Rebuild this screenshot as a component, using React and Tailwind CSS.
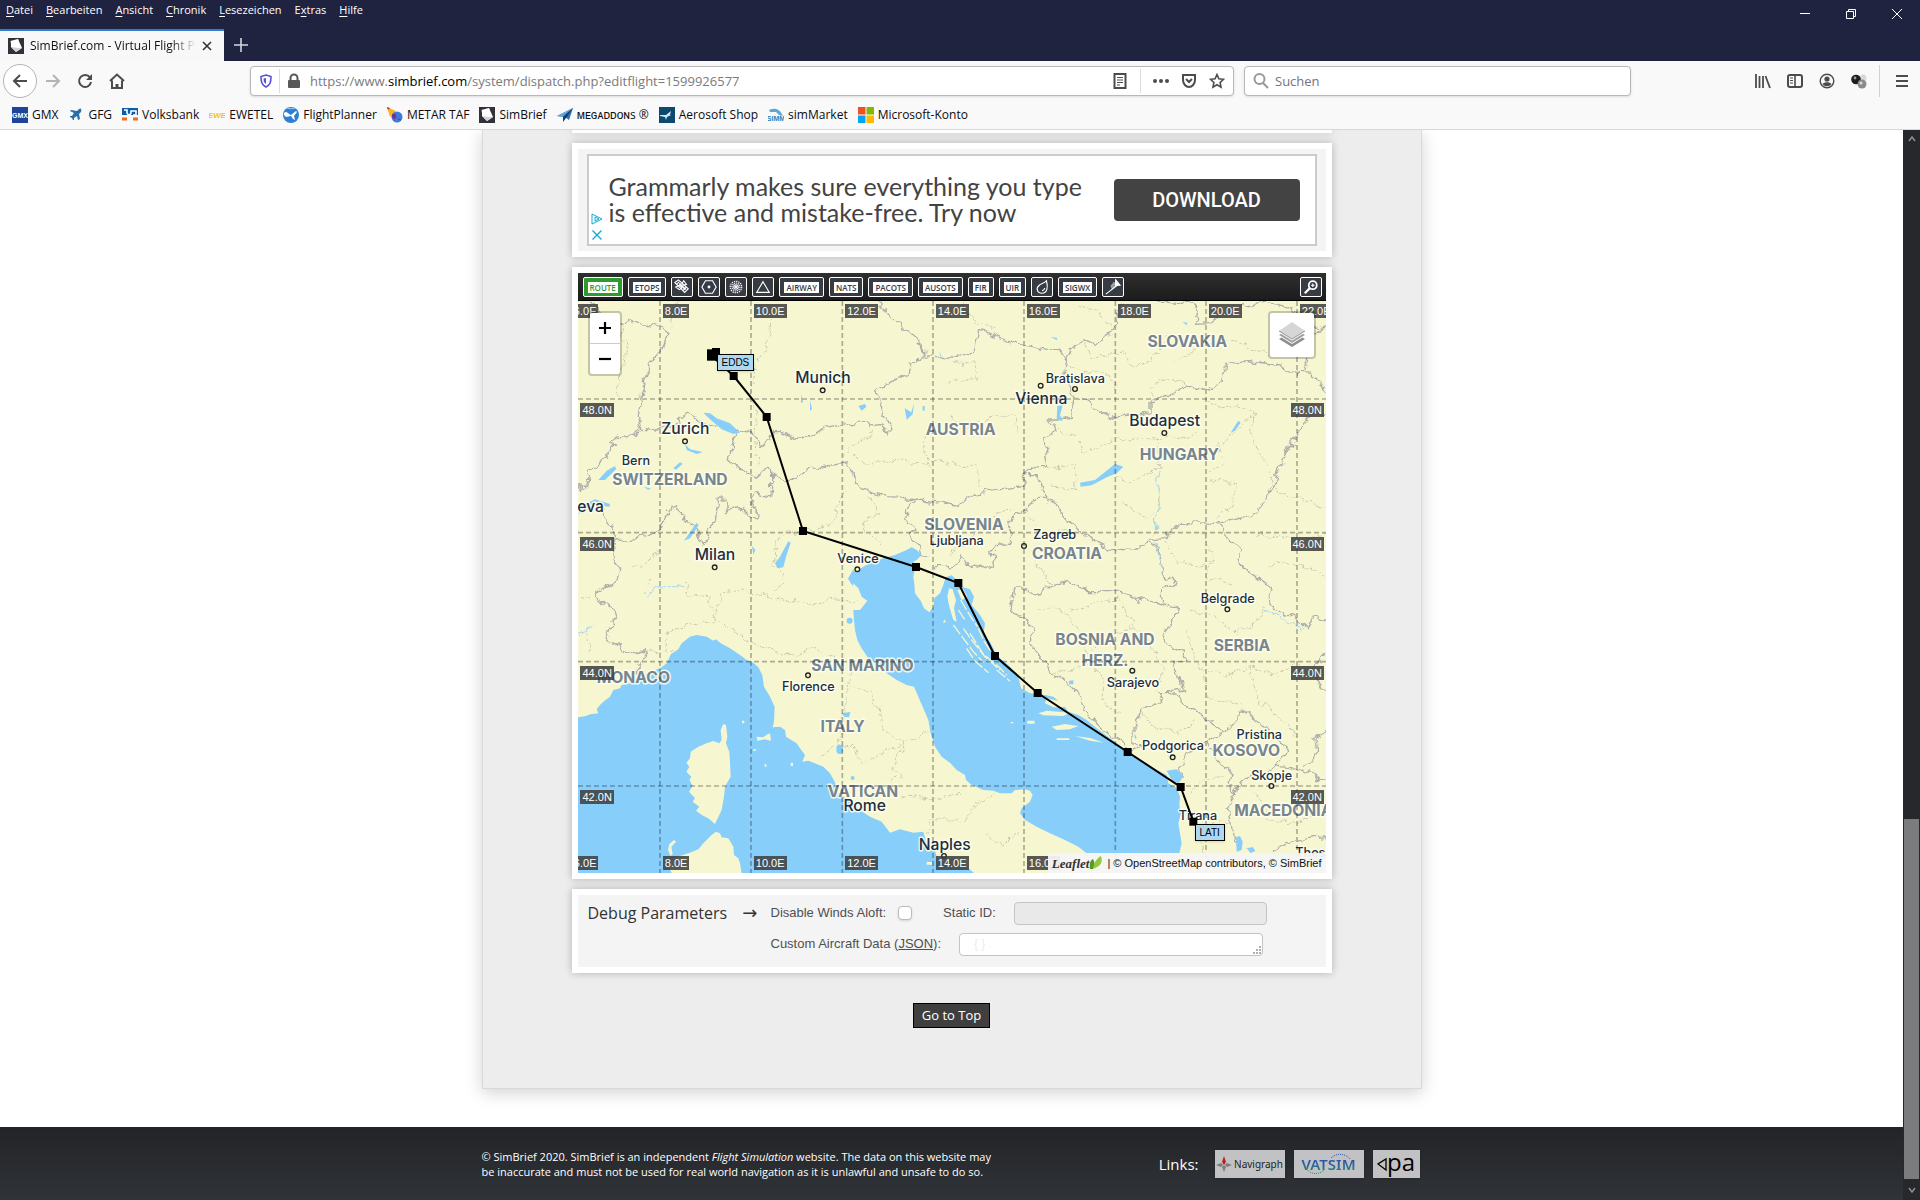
import React from "react";

/* ---------- browser chrome ---------- */

const MENU = ["Datei", "Bearbeiten", "Ansicht", "Chronik", "Lesezeichen", "Extras", "Hilfe"];
const MENU_KEY = { Extras: 1 };

function SimBriefIcon() {
  return (
    <svg className="size-4 shrink-0" viewBox="0 0 16 16" aria-hidden="true">
      <rect width="16" height="16" fill="#2f3236" />
      <path d="M2 3l8-2 1 2-8 3z" fill="#8c9095" />
      <path d="M3 3l7-2 4 9-6 4-5-5z" fill="#fff" />
      <path d="M3 9l5 5 6-4-4 0z" fill="#cfd2d6" />
    </svg>
  );
}

function BookmarkIcon({ name }) {
  const art = {
    gmx: (
      <>
        <rect width="16" height="16" fill="#1c449b" />
        <text x="8" y="11" fontSize="7" fontWeight="bold" textAnchor="middle" fill="#fff" fontFamily="Liberation Sans, sans-serif">GMX</text>
      </>
    ),
    gfg: <path d="M13 2c-1-1-2 0-4 2L3 3 2 4l4 2-2 3-2 0 0 1 2 1 1 2 1 0 0-2 3-2 1 4 2-1-1-5c2-2 3-3 2-5z" fill="#2a6fa8" />,
    vb: (
      <>
        <path d="M0 1h16v7H0z" fill="#0a5da8" />
        <path d="M2 3h3v3l2 3 2-3V4h5v4h-3" stroke="#fff" strokeWidth="1.6" fill="none" />
        <path d="M0 12h5M11 12h5" stroke="#f26a21" strokeWidth="3" />
      </>
    ),
    ewe: (
      <text x="8" y="11" fontSize="8" fontWeight="bold" fontStyle="italic" textAnchor="middle" fill="#f3c60c" fontFamily="Liberation Sans, sans-serif">EWE</text>
    ),
    fp: (
      <>
        <circle cx="8" cy="8" r="8" fill="#2d7fd6" />
        <path d="M1 6c3-3 4 1 7 2l5-4 1 1-3 4 1 4-2-1-2-3-5 1-2-2z" fill="#fff" />
        <path d="M4 1c3 1 5 1 8 0" stroke="#9ccaf5" fill="none" />
      </>
    ),
    metar: (
      <>
        <path d="M0 0l9 4-6 6z" fill="#f4b71f" />
        <path d="M0 0l3 1-2 2z" fill="#d23" />
        <circle cx="10" cy="10" r="5.5" fill="#3b7be0" />
        <path d="M6 7l3 1-1 4-3-2zM11 12l3 1" fill="#7c2f8a" stroke="#7c2f8a" />
      </>
    ),
    mega: (
      <>
        <path d="M0 9L16 1l-4 12-4-3z" fill="#2f6fb4" />
        <path d="M16 1L6 10v5l3-4z" fill="#133c70" />
        <path d="M0 9L16 1 5 10z" fill="#6aa4dc" />
      </>
    ),
    aero: (
      <>
        <rect width="16" height="16" fill="#0d4870" />
        <path d="M1 8h6l5-4-1 4 1 0-4 2-1 3-1-3-5-1z" fill="#d7e8f4" />
      </>
    ),
    simm: (
      <>
        <path d="M1 3c6-3 11-1 14 6L11 8 8 5 2 5z" fill="#5fa6d3" />
        <text x="8" y="14" fontSize="7" fontWeight="bold" textAnchor="middle" fill="#2f7fb2" fontFamily="Liberation Sans, sans-serif">SIMM</text>
      </>
    ),
    ms: (
      <>
        <path d="M0 0h7.500v7.500H0z" fill="#f25022" />
        <path d="M8.500 0H16v7.500H8.500z" fill="#7fba00" />
        <path d="M0 8.500h7.500V16H0z" fill="#00a4ef" />
        <path d="M8.500 8.500H16V16H8.500z" fill="#ffb900" />
      </>
    ),
  };
  if (name === "sb") return <SimBriefIcon />;
  return (
    <svg className="size-4 shrink-0" viewBox="0 0 16 16" aria-hidden="true">
      {art[name]}
    </svg>
  );
}

const BOOKMARKS = [
  ["gmx", "GMX"],
  ["gfg", "GFG"],
  ["vb", "Volksbank"],
  ["ewe", "EWETEL"],
  ["fp", "FlightPlanner"],
  ["metar", "METAR TAF"],
  ["sb", "SimBrief"],
  ["mega", "ᴍᴇɢᴀᴅᴅᴏɴs ®"],
  ["aero", "Aerosoft Shop"],
  ["simm", "simMarket"],
  ["ms", "Microsoft-Konto"],
];

function Glyph({ children, className = "size-4", box = "0 0 16 16" }) {
  return (
    <svg className={className} viewBox={box} fill="none" stroke="currentColor" strokeWidth="2" aria-hidden="true">
      {children}
    </svg>
  );
}

function Chrome() {
  return (
    <header className="shrink-0 font-['Open_Sans',sans-serif] text-xs">
      <div className="flex h-[61px] justify-between bg-[#202340] text-white">
        <div className="flex flex-col justify-between">
          <nav className="flex h-5 items-center gap-[13px] px-1.5 text-[11px]">
            {MENU.map((m) => {
              const k = MENU_KEY[m] || 0;
              return (
                <button key={m} type="button">
                  {m.slice(0, k)}
                  <u className="underline-offset-2">{m[k]}</u>
                  {m.slice(k + 1)}
                </button>
              );
            })}
          </nav>
          <div className="flex h-8 items-stretch">
            <div className="flex w-56 items-center gap-1.5 border-t-2 border-[#2f7bd0] bg-[#f8f8f8] pr-3 pl-2 text-[#111]">
              <SimBriefIcon />
              <span className="flex-1 overflow-hidden [mask-image:linear-gradient(to_right,black_85%,transparent)] whitespace-nowrap">
                SimBrief.com - Virtual Flight Planning
              </span>
              <button type="button" aria-label="Tab schließen" className="text-[#333]">
                <Glyph className="size-2.5" box="0 0 10 10"><path d="M1 1l8 8M9 1l-8 8" strokeWidth="1.6" /></Glyph>
              </button>
            </div>
            <button type="button" aria-label="Neuer Tab" className="px-2.5 text-[#d5d6de]">
              <Glyph className="size-3.5" box="0 0 14 14"><path d="M7 0v14M0 7h14" strokeWidth="1.6" /></Glyph>
            </button>
          </div>
        </div>
        <div className="flex h-7 items-center gap-9 pr-[18px]">
          <button type="button" aria-label="Minimieren">
            <Glyph className="size-2.5" box="0 0 10 10"><path d="M0 4.500h10" strokeWidth="1" /></Glyph>
          </button>
          <button type="button" aria-label="Verkleinern">
            <Glyph className="size-2.5" box="0 0 10 10"><path d="M.5 2.500h7v7h-7zM2.500 2.500v-2h7v7h-2" strokeWidth="1" /></Glyph>
          </button>
          <button type="button" aria-label="Schließen">
            <Glyph className="size-2.5" box="0 0 10 10"><path d="M0 0l10 10M10 0L0 10" strokeWidth="1" /></Glyph>
          </button>
        </div>
      </div>

      <div className="border-b border-[#d7d7d7] bg-[#f9f9fa] text-[#4c4c4f]">
        <div className="flex h-10 items-center">
          <div className="flex w-[250px] shrink-0 items-center gap-4 pl-[3px]">
            <button type="button" aria-label="Zurück" className="-mr-2 grid size-[34px] place-items-center rounded-full border border-[#b3b3b5] bg-white">
              <Glyph><path d="M15 8H2M8 2L2 8l6 6" /></Glyph>
            </button>
            <button type="button" aria-label="Vor" className="text-[#b4b4b6]">
              <Glyph><path d="M1 8h13M8 2l6 6-6 6" /></Glyph>
            </button>
            <button type="button" aria-label="Neu laden">
              <Glyph><path d="M13 4.500A6 6 0 1 0 14 9" /><path d="M15 1v6H9z" fill="currentColor" stroke="none" /></Glyph>
            </button>
            <button type="button" aria-label="Startseite">
              <Glyph><path d="M1 8l7-6.500L15 8M3 7.500V15h10V7.500" /><path d="M8 15v-4" strokeWidth="3" /></Glyph>
            </button>
          </div>
          <div className="flex h-[30px] flex-[966] items-center rounded-sm border border-[#b8b8ba] bg-white px-2 shadow-sm">
            <Glyph className="size-3.5 text-[#5a4fd6]" box="0 0 14 14">
              <path d="M7 1l5 1.500c0 6-1 8.500-5 10.500C3 11 2 8.500 2 2.500z" strokeWidth="1.600" />
              <path d="M7 4v6C5 9 4.500 7 4.500 4.500z" fill="currentColor" stroke="none" />
            </Glyph>
            <span className="mx-1.5 h-6 w-px bg-[#dcdcdc]" />
            <svg className="h-4 w-4 text-[#58585a]" viewBox="0 0 16 16" aria-hidden="true">
              <path d="M4.500 7V5a3.500 3.500 0 0 1 7 0v2" fill="none" stroke="currentColor" strokeWidth="2" />
              <rect x="2" y="7" width="12" height="8" rx="1" fill="currentColor" />
            </svg>
            <a href="https://www.simbrief.com/system/dispatch.php?editflight=1599926577" className="ml-2 flex-1 pt-0.5 text-[13px] text-[#7a7a7c]">
              https://www.<span className="text-black">simbrief.com</span>/system/dispatch.php?editflight=1599926577
            </a>
            <button type="button" aria-label="Leseansicht">
              <Glyph><path d="M2.500 1h11v14h-11z" /><path d="M5 4.500h6M5 7h6M5 9.500h6M5 12h3" strokeWidth="1" /></Glyph>
            </button>
            <span className="mr-3 ml-3 h-6 w-px bg-[#dcdcdc]" />
            <div className="flex items-center gap-3">
              <button type="button" aria-label="Seitenaktionen">
                <Glyph><g fill="currentColor" stroke="none"><circle cx="2" cy="8" r="2" /><circle cx="8" cy="8" r="2" /><circle cx="14" cy="8" r="2" /></g></Glyph>
              </button>
              <button type="button" aria-label="Pocket">
                <Glyph><path d="M2 2h12v5c0 4-3 7-6 7s-6-3-6-7z" /><path d="M5 6l3 3 3-3" /></Glyph>
              </button>
              <button type="button" aria-label="Lesezeichen">
                <Glyph><path d="M8 1.500l1.900 4.300 4.600.5-3.400 3.200.9 4.700L8 11.800l-4 2.400.9-4.700L1.500 6.300l4.600-.5z" strokeWidth="1.600" /></Glyph>
              </button>
            </div>
          </div>
          <label className="ml-2.5 flex h-[30px] flex-[369] items-center gap-1.5 rounded-sm border border-[#b8b8ba] bg-white px-2 shadow-sm">
            <Glyph className="size-4 text-[#98989a]"><circle cx="6.500" cy="6" r="5" /><path d="M10 10l5 5" /></Glyph>
            <input type="text" aria-label="Suchen" placeholder="Suchen" className="min-w-0 flex-1 pt-0.5 text-[13px] outline-none placeholder:text-[#737375]" />
          </label>
          <div className="flex w-[289px] shrink-0 items-center justify-end gap-4 pr-3">
            <button type="button" aria-label="Bibliothek">
              <Glyph><path d="M1 1v14M4.500 3v12M8 3v12M10.500 3l4.500 12" strokeWidth="1.800" /></Glyph>
            </button>
            <button type="button" aria-label="Sidebar">
              <Glyph><rect x="1" y="2" width="14" height="12" rx="2" /><path d="M8 2v12" strokeWidth="1.600" /><path d="M3 5h3M3 7.500h3M3 10h3" strokeWidth="1" /></Glyph>
            </button>
            <button type="button" aria-label="Konto">
              <Glyph><circle cx="8" cy="8" r="6.800" strokeWidth="1.400" /><circle cx="8" cy="6" r="2.600" fill="currentColor" stroke="none" /><path d="M3.500 11c2-2.500 7-2.500 9 0-2 3-7 3-9 0z" fill="currentColor" stroke="none" /></Glyph>
            </button>
            <button type="button" aria-label="Erweiterung">
              <svg className="size-4" viewBox="0 0 16 16" aria-hidden="true">
                <circle cx="12" cy="5" r="3.500" fill="#d9d9d9" />
                <circle cx="5" cy="6.500" r="4.800" fill="#1d1d1d" />
                <circle cx="4" cy="5" r="1.400" fill="#9a9a9a" />
                <circle cx="11" cy="11" r="4.500" fill="#8b8b8b" />
                <circle cx="10" cy="10" r="1.500" fill="#dcdcdc" />
              </svg>
            </button>
            <span className="-ml-1 h-8 w-px bg-[#d2d2d4]" />
            <button type="button" aria-label="Menü">
              <Glyph className="h-3 w-3" box="0 0 12 12"><path d="M0 1h12M0 6h12M0 11h12" /></Glyph>
            </button>
          </div>
        </div>
        <nav className="flex h-7 items-center gap-2.5 pl-3 text-xs text-[#0c0c0d]">
          {BOOKMARKS.map(([icon, label]) => (
            <a key={label} href={"#" + icon} className="flex items-center gap-1 whitespace-nowrap">
              <BookmarkIcon name={icon} />
              {label}
            </a>
          ))}
        </nav>
      </div>
    </header>
  );
}

/* ---------- map ---------- */

const MAP_X = 24;
const MAP_Y = 3;
const MAP_W = 2244;
const MAP_H = 1716;
const at = (x, y) => ({
  left: ((x - MAP_X) / MAP_W) * 100 + "%",
  top: ((y - MAP_Y) / MAP_H) * 100 + "%",
});

const MERIDIANS = [-3, 270, 543, 817, 1089, 1362, 1636, 1908, 2181];
const PARALLELS = [
  [297, "48.0N"],
  [698, "46.0N"],
  [1085, "44.0N"],
  [1458, "42.0N"],
];

const ROUTE = [
  [425, 167], [491, 228], [590, 351], [699, 693], [1038, 801], [1165, 849],
  [1275, 1068], [1403, 1179], [1673, 1356], [1832, 1461], [1870, 1565],
];

const COUNTRIES = [
  ["SWITZERLAND", 300, 555], ["AUSTRIA", 1172, 405], ["SLOVENIA", 1182, 691], ["CROATIA", 1491, 776],
  ["HUNGARY", 1828, 481], ["SLOVAKIA", 1852, 142], ["SAN MARINO", 877, 1112], ["MONACO", 190, 1148],
  ["ITALY", 818, 1297], ["VATICAN", 879, 1491], ["BOSNIA AND", 1605, 1034], ["HERZ.", 1605, 1097],
  ["SERBIA", 2016, 1054], ["KOSOVO", 2029, 1368], ["MACEDONIA", 2140, 1548],
];

const CITIES = [
  ["Munich", 759, 250], ["Zurich", 346, 403], ["eva", 62, 636], ["Milan", 435, 781], ["Vienna", 1414, 312],
  ["Budapest", 1784, 378], ["Rome", 884, 1533], ["Naples", 1124, 1649],
];

const TOWNS = [
  ["Bern", 198, 496], ["Venice", 864, 788], ["Ljubljana", 1160, 734], ["Zagreb", 1454, 716], ["Bratislava", 1516, 248],
  ["Florence", 715, 1173], ["Sarajevo", 1689, 1162], ["Belgrade", 1973, 908], ["Pristina", 2068, 1316],
  ["Podgorica", 1809, 1351], ["Skopje", 2105, 1439], ["Tirana", 1884, 1560], ["Thessaloniki", 2290, 1672],
];

const DOTS = [
  [758, 271], [345, 424], [434, 802], [862, 808], [1362, 738], [1515, 267], [1412, 257], [1783, 399],
  [714, 1126], [1122, 1668], [1687, 1112], [1972, 928], [1808, 1372], [2104, 1458],
];

const SEA = [
  "M24 1252L48 1248L60 1243L85 1240L80 1228L90 1215L100 1205L120 1190L130 1170L150 1165L155 1155L180 1150L205 1130L235 1120L275 1102L290 1090L303 1062L325 1048L335 1030L360 1010L380 1005L410 1010L430 1022L438 1018L450 1028L480 1045L510 1065L530 1080L550 1088L565 1102L577 1125L582 1160L600 1190L614 1220L612 1265L608 1282L630 1280L645 1290L648 1310L680 1330L690 1345L705 1365L697 1385L715 1382L760 1400L780 1420L795 1447L805 1480L835 1500L870 1530L900 1550L935 1565L960 1598L990 1588L1030 1598L1060 1595L1070 1630L1092 1640L1100 1670L1110 1685L1135 1680L1150 1672L1172 1690L1190 1700L1212 1719L24 1719Z",
  "M838 830L850 815L868 808L880 800L900 790L940 775L975 765L1005 752L1025 742L1040 750L1055 765L1040 780L1030 785L1036 800L1030 830L1033 850L1035 880L1052 902L1062 925L1078 937L1090 920L1093 895L1110 880L1120 855L1127 832L1145 826L1160 840L1180 862L1200 868L1212 890L1205 915L1230 945L1245 970L1240 1005L1260 1025L1275 1055L1290 1075L1320 1100L1345 1130L1353 1165L1380 1180L1425 1185L1450 1190L1480 1215L1495 1235L1525 1245L1550 1260L1580 1285L1620 1315L1655 1340L1685 1360L1720 1385L1760 1410L1790 1425L1795 1450L1820 1465L1830 1490L1828 1515L1833 1540L1825 1570L1830 1600L1835 1630L1828 1660L1550 1660L1525 1640L1485 1620L1440 1600L1400 1580L1365 1560L1350 1540L1355 1525L1380 1505L1388 1485L1380 1472L1365 1468L1335 1470L1325 1480L1290 1480L1270 1472L1240 1470L1205 1455L1188 1440L1185 1425L1160 1410L1140 1388L1115 1370L1095 1340L1082 1300L1075 1260L1060 1225L1045 1190L1032 1160L1010 1155L980 1140L950 1120L925 1095L895 1075L875 1045L862 1020L855 990L852 960L850 930L870 930L892 902L875 890L865 865L845 845Z",
];

const ISLANDS = [
  "M460 1272L468 1275L472 1310L468 1330L478 1355L480 1385L482 1430L465 1460L462 1490L455 1530L435 1572L415 1555L395 1545L378 1532L388 1520L368 1505L375 1495L357 1475L368 1458L358 1440L364 1430L349 1415L358 1400L349 1388L360 1375L362 1355L385 1340L410 1330L430 1323L448 1330L455 1320L452 1290Z",
  "M437 1595L450 1600L455 1612L475 1615L490 1640L492 1665L505 1675L510 1690L515 1719L305 1719L296 1700L305 1680L330 1668L355 1660L385 1648L400 1630L425 1605Z",
  "M312 1620L318 1625L304 1640L308 1662L302 1668L294 1650L298 1632Z",
  "M560 1310L580 1312L590 1304L600 1300L603 1322L592 1320L585 1318L562 1322Z",
  "M1137 865L1148 868L1158 900L1152 925L1160 965L1150 960L1138 920L1132 890Z",
  "M1162 870L1180 868L1192 890L1175 900Z",
  "M1128 965L1122 958L1120 970Z M516 1262h7v8h-7z M550 1347h8v5h-8z M584 1392h5v8h-5z M662 1388h7v10h-7z M1070 1686h16v8h-16z",
  "M1405 1240L1430 1232L1500 1238L1480 1248L1420 1246Z",
  "M1445 1280L1485 1272L1525 1278L1500 1288L1460 1290Z",
  "M1430 1195L1480 1205L1500 1220L1450 1222L1425 1210Z",
  "M1515 1308L1560 1314L1602 1328L1560 1322Z M1372 1262h22v9h-22z M1322 1266h8v4h-8z M1460 1315h38v5h-38z",
];

const ISLET_LINES = [
  "M1172 900l30 50l20 30", "M1150 975l30 40l30 40l30 32", "M1180 985l25 35l40 50l45 40", "M1165 930l20 30",
  "M1200 1000l40 62l50 42l20 22", "M1190 1045l25 38l40 35", "M1225 985l18 40l28 42", "M1280 1110l40 34",
];

const LAKES = [
  "M400 338L420 340L440 355L480 370L510 398L490 402L455 388L425 362Z",
  "M655 724L662 728L648 770L640 802L622 805L615 790L630 770Z",
  "M1532 560L1530 548L1575 540L1635 492L1660 500L1640 520L1610 532L1565 556Z",
  "M1462 318L1478 316L1470 345L1478 362L1460 360Z",
  "M24 640L40 615L75 598L120 612L118 620L70 615L40 640Z",
  "M85 540L110 512L135 498L138 508L105 540Z",
  "M380 668L386 676L360 715L342 722L365 690Z",
  "M345 432L360 448L398 456L380 462L350 450Z",
  "M865 318l20-6 4 8-14 12z M693 283l6 22-6 4z M720 300l6 28-6 4z M1004 325l20 12 8-28-4 34-18 16z M1058 318h6v14h-6z",
  "M1982 398L2005 362L2012 368L1995 392Z M1838 66l14 2-2 8z M1442 110l20 4-2 6z",
  "M310 505l20-18 8 4-20 18z M286 440l14 6 M222 560l22 6-10 3z M546 738l10 12-6 14z",
  "M830 962a9 9 0 1 1 18 0a9 9 0 1 1-18 0M815 1240l26-4-4 16-14-2zM800 1348a10 10 0 1 1 18 0a10 10 0 1 1-18 0M842 1434a6 6 0 1 1 12 0a6 6 0 1 1-12 0",
  "M1790 1412L1820 1408L1840 1430L1825 1450L1805 1440Z M1496 1143l14-2v12h-12z",
  "M1998 1612L2010 1608L2018 1625L2015 1650L2000 1655Z M2030 1645l18-4 8 12-14 6z",
  "M1694 1300l6 14-6 2z M850 808l8 20-10 30-14-22z",
];

const BORDERS = [
  "M150 70L175 70L190 58L215 75L250 78L295 98L270 150L245 180L225 240L215 280L205 350L215 385L190 410L140 402L120 425L135 430L110 470L60 520L50 550L24 575",
  "M150 70L90 40L60 10",
  "M215 385L260 390L290 380L330 372L325 350L350 340L370 355L395 368L455 388",
  "M485 488L475 480L480 450L490 430L500 395L520 390L545 400L575 440L605 420L610 395L630 395L680 420L735 405L765 385L840 370L860 360L900 370L935 375L955 405L962 370L935 345L945 325L915 275L960 240L1010 225L1020 180L1058 178L1062 140L1020 100L1000 85L980 60L930 20L925 3",
  "M1062 140L1065 170L1100 172L1140 178L1160 165L1185 170L1215 150L1225 92L1250 95L1290 115L1330 125L1365 140L1440 148L1465 148L1490 180L1485 215L1500 260L1515 295L1505 330L1510 355L1460 360L1425 360L1450 375L1455 400L1425 415L1430 500L1405 500L1360 530L1358 560L1300 565L1240 575L1210 580L1165 620L1140 612L1100 605L1040 600L960 590L880 568L850 540L845 515L830 495L842 485L800 490L720 510L690 525L650 545L605 530L605 510L590 505L565 530L530 515L485 488",
  "M605 530L605 560L602 590L555 580L545 600L550 620L565 640L555 655L530 635L500 620L470 635L465 600L445 600L440 660L410 690L415 720L400 732L385 700L370 680L330 650L325 610L300 630L280 670L265 690L235 710L175 715L135 720L130 690L105 650L100 620",
  "M135 720L125 760L155 815L145 842L80 875L100 915L135 930L140 955L110 985L120 1020L150 1045L180 1060L222 1050L230 1065L215 1090L195 1115",
  "M1040 600L1010 640L1005 655L1035 690L1020 700L1050 740L1055 765L1072 775",
  "M1375 530L1405 530L1415 570L1430 595L1398 595L1390 615L1315 665L1325 690L1320 725L1265 750L1275 800L1250 805L1215 790L1195 800L1170 770L1140 800L1085 800",
  "M1430 595L1460 615L1495 660L1535 700L1580 725L1615 742L1695 748L1745 715L1780 710L1840 668L1940 670L2010 655L2050 650L2075 620L2085 580L2110 560L2125 510L2180 400L2220 350L2268 345",
  "M1515 295L1540 295L1570 325L1620 348L1700 345L1740 335L1740 300L1800 285L1850 255L1910 270L1955 245L1970 190L2020 182L2100 195L2125 190L2150 215L2200 218L2225 220L2235 245L2268 275",
  "M1490 180L1505 140L1535 120L1580 130L1625 100L1645 75L1650 20L1660 5",
  "M1765 3L1820 10L1860 10L1885 35L1880 70L1920 68L1970 45L2020 15L2090 10L2140 20L2190 45L2240 80L2268 75M2255 75L2225 110L2200 218",
  "M1745 715L1770 760L1775 800L1780 820L1822 850L1780 868L1780 910",
  "M1940 670L1970 710L2010 740L2015 800L2060 830L2110 865L2095 900L2115 930L2180 955L2215 990L2235 950L2268 960",
  "M1335 855L1350 855L1390 880L1410 885L1440 855L1485 845L1520 855L1550 875L1620 875L1690 882L1700 905L1720 895L1780 915L1825 920L1805 970L1785 1010L1790 1035L1830 1055L1855 1080L1810 1090L1830 1130L1840 1170L1800 1175L1765 1175L1775 1205L1725 1225L1695 1270L1695 1330L1710 1340L1685 1360",
  "M1335 855L1330 900L1325 940L1365 950L1385 995L1385 1030L1435 1100L1530 1185L1540 1225L1560 1250L1590 1280L1630 1310L1670 1340",
  "M1800 1175L1860 1220L1910 1255L1960 1295L1940 1310L1910 1320L1860 1355L1830 1400L1840 1430",
  "M1960 1295L1990 1270L2020 1225L2055 1260L2080 1280L2130 1320L2150 1360L2120 1400L2070 1425L2010 1440L1995 1480L1980 1460L1985 1430L1930 1360L1910 1320",
  "M1995 1480L1975 1520L1985 1580L1990 1620L2020 1640",
  "M2120 1400L2190 1405L2230 1425L2268 1450M2268 1060L2225 1105L2268 1190M2268 1295L2235 1310L2240 1360L2200 1400M2100 1660L2170 1620L2268 1610",
];

const REGIONS = [
  "M150 70L170 130L160 200L140 290", "M330 3L300 80M580 10L605 60L600 110L560 190L545 260L560 340L555 400L565 500",
  "M840 440L900 410L905 390M840 440L820 470M850 470L900 490L960 480L1070 490L1110 480L1140 500", "M1080 380L1060 440L1080 500",
  "M840 570L810 600L790 660L740 690L650 700L620 720L610 790", "M610 790L640 830L620 870M190 800L270 760L270 750",
  "M900 590L920 640L880 660L885 700L940 740", "M340 840L360 885L420 890L435 960L470 980L500 1000L560 1040L640 1065L700 1060L730 1045L800 1080",
  "M435 960L450 880L520 870L600 890L700 912L800 900L860 905", "M280 1050L300 990L390 970L400 960L435 970",
  "M240 840L220 880M310 1055L280 1050L230 1060", "M840 1120L830 1190L820 1240L800 1330L850 1340L880 1388L1000 1330L1080 1290",
  "M840 1150L900 1180L930 1220L940 1290L1000 1330M1000 1330L970 1400L1000 1430L960 1440L960 1470", "M740 1380L790 1340M1000 1490L1080 1500L1170 1480M1070 1600L1080 1560L1170 1560",
  "M1180 3L1200 60L1280 95M1140 240L1220 240L1215 190L1150 185M1530 20L1580 30L1620 80M1540 130L1560 180L1660 150L1690 200L1740 190L1800 110",
  "M1500 200L1560 215L1620 220L1640 280M1820 190L1900 130L2000 120L2100 170M1740 300L1760 240L1800 235L1850 255",
  "M1520 410L1480 400L1440 360M1530 420L1540 460L1640 420L1740 410L1850 420L1880 400M1400 510L1520 490L1520 570L1440 560",
  "M1760 410L1770 510L1680 545L1640 530M1640 600L1700 640L1740 650L1770 620M1770 560L1755 700M1920 540L2000 545L1990 600L1940 660",
  "M1940 420L1960 500L1920 520M1960 430L2020 370L2060 340M2060 340L2040 400L2090 500L2110 560M1910 300L1950 330L2000 310L2060 340",
  "M2110 570L2200 600L2268 620M2060 700L2200 720L2268 700M2090 800L2180 790L2268 830M1900 700L1930 760L1910 830L1990 860",
  "M1140 350L1200 380L1280 340L1340 350L1340 390M1140 490L1220 500L1230 560M1140 760L1200 730L1240 660L1330 620",
  "M1380 640L1400 700L1500 690M1440 850L1400 800L1380 750M1780 720L1820 790L1900 800L1930 760",
  "M1400 920L1480 930L1530 1000L1560 1080L1600 1140L1600 1220L1650 1240M1500 930L1640 900L1680 950L1700 980L1620 1000L1560 1050",
  "M1700 980L1740 1030L1780 1100L1760 1170M1440 1110L1500 1120L1560 1080M1850 1000L1880 1100L1960 1130L2040 1100L2120 1130L2180 1080",
  "M1860 930L1930 950L2000 1000L2060 960L2090 920M1900 1130L1920 1200L2020 1210M2040 1100L2060 1200L2130 1250L2180 1310M2180 1080L2240 1140",
  "M1720 1240L1760 1290L1840 1290L1880 1260M1860 1480L1900 1440L1960 1430M1900 1660L1890 1600L1940 1560L1980 1570M2060 1480L2100 1560L2180 1570L2268 1520",
  "M1180 1560L1240 1500L1270 1480M1240 1600L1300 1640L1340 1600M60 900L30 890M24 1010L50 990L60 1060",
];

const RIVERS = "M1762 520L1770 600L1755 690M1760 720L1768 765L1775 800M2080 930L2150 960L2200 990M230 890L270 860L340 860M1560 300L1530 292M1100 145l10 30M24 1000l40-14";

function EuropeMap() {
  return (
    <svg className="block size-full" viewBox="24 3 2244 1716" preserveAspectRatio="none" role="img" aria-label="Map of the planned route from EDDS to LATI">
      <defs>
        <filter id="terrain" filterUnits="userSpaceOnUse" x="0" y="-20" width="2300" height="1760">
          <feTurbulence type="fractalNoise" baseFrequency="0.03" numOctaves="3" seed="4" />
          <feDisplacementMap in="SourceGraphic" scale="34" xChannelSelector="R" yChannelSelector="G" />
        </filter>
      </defs>
      <rect x="24" y="3" width="2244" height="1716" fill="#f6f6d0" />
      <g filter="url(#terrain)">
        <g fill="none" stroke="#c9c9b2" strokeWidth="3" strokeDasharray="10 5" strokeLinejoin="round">
          {REGIONS.map((d) => <path key={d} d={d} />)}
        </g>
        <g fill="none" stroke="#aeaeaa" strokeWidth="4" strokeLinejoin="round">
          {BORDERS.map((d) => <path key={d} d={d} />)}
        </g>
        <path d={RIVERS} fill="none" stroke="#a9d8ef" strokeWidth="3" />
      </g>
      <g fill="#87cefa">
        {SEA.map((d) => <path key={d} d={d} />)}
        {LAKES.map((d) => <path key={d} d={d} />)}
      </g>
      <g fill="#f6f6d0">
        {ISLANDS.map((d) => <path key={d} d={d} />)}
      </g>
      <g fill="none" stroke="#f6f6d0" strokeWidth="4" strokeDasharray="34 7">
        {ISLET_LINES.map((d) => <path key={d} d={d} />)}
      </g>

      <g fontFamily="Inter, sans-serif" textAnchor="middle" stroke="#fffff0" strokeOpacity="0.850" strokeWidth="9" strokeLinejoin="round" paintOrder="stroke">
        <g fontSize="47" fontWeight="700" fill="#76858f">
          {COUNTRIES.map(([t, x, y]) => <text key={t} x={x} y={y}>{t}</text>)}
        </g>
        <g fontSize="47" fontWeight="500" fill="#1d2f41">
          {CITIES.map(([t, x, y]) => <text key={t} x={x} y={y}>{t}</text>)}
        </g>
        <g fontSize="38" fontWeight="500" fill="#1d2f41">
          {TOWNS.map(([t, x, y]) => <text key={t} x={x} y={y}>{t}</text>)}
        </g>
      </g>
      <g fill="#f6f6d0" stroke="#222" strokeWidth="4">
        {DOTS.map(([x, y]) => <circle key={x} cx={x} cy={y} r="7" />)}
      </g>

      <g stroke="#000" strokeOpacity="0.300" strokeWidth="5" strokeDasharray="15 9">
        {MERIDIANS.map((x) => <path key={x} d={"M" + x + " 3V1719"} />)}
        {PARALLELS.map(([y]) => <path key={y} d={"M24 " + y + "H2268"} />)}
      </g>

      <polyline points={ROUTE.map((p) => p.join(",")).join(" ")} fill="none" stroke="#000" strokeWidth="6" />
      {ROUTE.slice(1).map(([x, y]) => <rect key={x} x={x - 12} y={y - 12} width="24" height="24" />)}
      <rect x="411" y="148" width="30" height="34" />
      <rect x="426" y="144" width="24" height="24" />
    </svg>
  );
}

function GridTag({ x, y, children }) {
  return (
    <span className="absolute bg-[#3c3c3c]/85 px-0.5 text-[11px] leading-[14px] text-white" style={at(x, y)}>
      {children}
    </span>
  );
}

function AirportTag({ x, y, children }) {
  return (
    <span className="absolute border border-black bg-[#add8f0] px-1 text-[10px] leading-[15px] text-black shadow" style={at(x, y)}>
      {children}
    </span>
  );
}

function MapView() {
  return (
    <div className="relative h-[572px] overflow-hidden font-['Liberation_Sans',sans-serif]">
      <EuropeMap />
      {MERIDIANS.map((x, i) => (
        <React.Fragment key={x}>
          <GridTag x={x + 10} y={12}>{6 + i * 2 + ".0E"}</GridTag>
          {x < 1500 && <GridTag x={x + 10} y={1668}>{6 + i * 2 + ".0E"}</GridTag>}
        </React.Fragment>
      ))}
      {PARALLELS.map(([y, label]) => (
        <React.Fragment key={y}>
          <GridTag x={33} y={y + 12}>{label}</GridTag>
          <GridTag x={2163} y={y + 12}>{label}</GridTag>
        </React.Fragment>
      ))}
      <AirportTag x={441} y={162}>EDDS</AirportTag>
      <AirportTag x={1875} y={1572}>LATI</AirportTag>

      <div className="absolute top-2.5 left-2.5 flex flex-col rounded border-2 border-black/20 bg-white bg-clip-padding text-black">
        <button type="button" aria-label="Zoom in" className="grid h-[31px] w-[30px] place-items-center border-b border-[#ccc]">
          <Glyph className="size-3.5" box="0 0 14 14"><path d="M7 1v12M1 7h12" strokeWidth="2.200" /></Glyph>
        </button>
        <button type="button" aria-label="Zoom out" className="grid h-[30px] w-[30px] place-items-center">
          <Glyph className="size-3.5" box="0 0 14 14"><path d="M1 7h12" strokeWidth="2.200" /></Glyph>
        </button>
      </div>

      <button type="button" aria-label="Layers" className="absolute top-2.5 right-2.5 grid size-12 place-items-center rounded border-2 border-black/20 bg-white bg-clip-padding">
        <svg className="size-[26px]" viewBox="0 0 26 26" aria-hidden="true">
          <path d="M0 17L13 9l13 8-13 8z" fill="#8d8d8d" />
          <path d="M0 14L13 6l13 8-13 8z" fill="#fff" />
          <path d="M0 13L13 5l13 8-13 8z" fill="#a3a3a3" />
          <path d="M0 10.500L13 2.500l13 8-13 8z" fill="#fff" />
          <path d="M0 9L13 0l13 9-13 8z" fill="#d6d6d6" />
          <path d="M0 9l13 8 13-8" fill="none" stroke="#7d7d7d" strokeWidth="0.800" />
        </svg>
      </button>

      <div className="absolute right-0 bottom-0 flex h-5 items-center gap-1 bg-[#f4f4f4]/95 px-1 text-xs text-[#111]">
        <a href="#leaflet" className="flex items-center font-['Liberation_Serif',serif] text-[13px] leading-none font-bold text-[#333] italic">
          Leaflet
          <svg className="h-3.5 w-3.5" viewBox="0 0 14 14" aria-hidden="true">
            <path d="M1 13C0 6 2 4 4 3c2 3 2 7 0 10z" fill="#5c9a1e" />
            <path d="M4 13C5 6 8 2 12 0c2 6 0 10-8 13z" fill="#92c83e" />
          </svg>
        </a>
        <span className="text-[11px] whitespace-nowrap">| © OpenStreetMap contributors, © SimBrief</span>
      </div>
    </div>
  );
}

/* ---------- map toolbar ---------- */

const TOOLS = ["ROUTE", "ETOPS", "*sat", "*hex", "*rings", "*tri", "AIRWAY", "NATS", "PACOTS", "AUSOTS", "FIR", "UIR", "*drop", "SIGWX", "*sock"];

const TOOL_ART = {
  sat: (
    <>
      <path d="M1 4l4-3 11 10-4 4z" />
      <path d="M3 6l3-3M10 13l4-4M2 9l4-2 3 3-3 2zM11 2l3 4-3 1-2-2z" />
      <path d="M6 5l7 7" strokeWidth="2" />
    </>
  ),
  hex: (
    <>
      <path d="M5 2h8l4 7-4 7H5L1 9z" />
      <circle cx="9" cy="9" r="1" fill="currentColor" />
    </>
  ),
  rings: (
    <>
      <circle cx="9" cy="9" r="6.500" strokeDasharray="1.500 1" />
      <circle cx="9" cy="9" r="4.500" strokeDasharray="1.500 .8" />
      <circle cx="9" cy="9" r="2.500" />
      <circle cx="9" cy="9" r="1" />
    </>
  ),
  tri: <path d="M9 3l7 12H2z" />,
  drop: (
    <>
      <path d="M14 2c2 7 1 14-5 14-6 0-7-6-3-9 2-2 6-2 8-5z" />
      <path d="M9 13c1 0 3-1 3-3" />
    </>
  ),
  sock: (
    <>
      <path d="M1 17L15 6" />
      <path d="M10 3l5 4-7 5-2-4z" fill="currentColor" stroke="none" opacity="0.500" />
      <path d="M12 1l5 6-5 0z" fill="currentColor" />
    </>
  ),
  mag: (
    <>
      <circle cx="11" cy="7" r="4.500" strokeWidth="2" />
      <path d="M8 10l-6 6" strokeWidth="2.500" />
      <path d="M11 5v4M9 7h4" />
    </>
  ),
};

function IconTool({ name, label }) {
  return (
    <button type="button" aria-label={label} className="grid h-5 w-[22px] place-items-center rounded-xs border border-white bg-[#373b44] text-white">
      <svg className="size-4" viewBox="0 0 18 18" fill="none" stroke="currentColor" strokeWidth="1.300" aria-hidden="true">
        {TOOL_ART[name]}
      </svg>
    </button>
  );
}

function Toolbar() {
  return (
    <div className="flex h-7 items-center gap-[5px] border-b border-black bg-linear-to-b from-[#2f2f2f] to-[#1c1c1c] px-1 pt-px pl-[5px] font-['Open_Sans',sans-serif]">
      {TOOLS.map((t, i) =>
        t[0] === "*" ? (
          <IconTool key={t} name={t.slice(1)} label={t.slice(1)} />
        ) : (
          <button
            key={t}
            type="button"
            className={
              i === 0
                ? "flex h-5 items-center rounded-xs border border-white bg-[#2f9a2f] px-1 text-[#2f9a2f]"
                : "flex h-5 items-center rounded-xs border border-white bg-[#373b44] px-1 text-[#373b44]"
            }
          >
            <span className="bg-white px-0.5 text-[8px] leading-[11px] font-semibold">{t}</span>
          </button>
        )
      )}
      <span className="flex-1" />
      <IconTool name="mag" label="Search map" />
    </div>
  );
}

/* ---------- page ---------- */

function Panel({ children, className = "" }) {
  return (
    <section className={"bg-white p-1.5 shadow-[0_0_8px_rgba(0,0,0,0.25)] " + className}>
      <div className="bg-[#f4f4f4]">{children}</div>
    </section>
  );
}

function Advert() {
  return (
    <div className="px-[9px] py-[5px]">
      <div className="relative flex h-[92px] items-center justify-between border-2 border-[#ccc] bg-white pr-[15px] pl-5">
        <p className="pb-0.5 font-['Lato',sans-serif] text-[25px] leading-[26px] text-[#434343]">
          Grammarly makes sure everything you type
          <br />
          is effective and mistake-free. Try now
        </p>
        <button type="button" className="h-[42px] w-[186px] rounded bg-[#434343] font-['Roboto',sans-serif] text-xl font-medium text-white">
          DOWNLOAD
        </button>
        <div className="absolute bottom-[3px] left-0.5 flex flex-col gap-1 text-[#18a9cf]">
          <Glyph className="size-3" box="0 0 12 12"><path d="M1 1l10 5-10 5zM4 4l4 2-4 2z" strokeWidth="1" /></Glyph>
          <Glyph className="size-3" box="0 0 12 12"><path d="M1.500 1.500l9 9M10.500 1.500l-9 9" strokeWidth="1.400" /></Glyph>
        </div>
      </div>
    </div>
  );
}

function DebugForm() {
  return (
    <form className="flex h-[72px] pt-1.5 pl-2.5 font-['Liberation_Sans',sans-serif] text-[13px] text-[#505050]" onSubmit={(e) => e.preventDefault()}>
      <h2 className="flex h-6 w-[183px] shrink-0 items-center gap-[15px] font-['Open_Sans',sans-serif] text-base text-[#333]">
        Debug Parameters <span className="font-['DejaVu_Sans',sans-serif] text-lg leading-6">→</span>
      </h2>
      <div className="flex flex-col gap-[7px]">
        <div className="flex h-6 items-center">
          <label htmlFor="winds">Disable Winds Aloft:</label>
          <input id="winds" type="checkbox" className="ml-3 size-3.5 appearance-none rounded-sm border border-[#bbb] bg-white shadow-sm" />
          <label htmlFor="static" className="ml-[31px]">Static ID:</label>
          <input id="static" type="text" disabled className="ml-[18px] h-[23px] w-[253px] rounded border border-[#c4c4c4] bg-[#e9e9e9]" />
        </div>
        <div className="flex h-6 items-center">
          <label htmlFor="json">
            Custom Aircraft Data (<u>JSON</u>):
          </label>
          <div className="relative ml-[18px] flex">
            <textarea id="json" rows="1" placeholder="{ }" className="h-[23px] w-[304px] resize-none rounded border border-[#c4c4c4] bg-white px-3.5 text-xs leading-5 outline-none placeholder:text-[#ececec]" />
            <svg className="absolute right-0.5 bottom-0.5 size-2" viewBox="0 0 8 8" fill="#b0b0b0" aria-hidden="true">
              <path d="M6 0h2v2H6zM6 3h2v2H6zM3 3h2v2H3zM6 6h2v2H6zM3 6h2v2H3zM0 6h2v2H0z" />
            </svg>
          </div>
        </div>
      </div>
    </form>
  );
}

function Footer() {
  return (
    <footer className="min-h-[73px] flex-1 bg-linear-to-b from-[#222427] to-[#303338] font-['Open_Sans',sans-serif] text-white">
      <div className="mx-auto flex max-w-[940px] items-center justify-between pt-[22px] pr-0.5">
        <p className="text-[11px] leading-[15px]">
          © SimBrief 2020. SimBrief is an independent <em>Flight Simulation</em> website. The data on this website may
          <br />
          be inaccurate and must not be used for real world navigation as it is unlawful and unsafe to do so.
        </p>
        <div className="flex items-center gap-[9px]">
          <span className="mr-[7px] text-[15px]">Links:</span>
          <a href="#navigraph" className="flex h-7 w-[70px] items-center justify-center gap-0.5 bg-[#c2c2c4] text-[#222] shadow">
            <svg className="h-4 w-4 shrink-0" viewBox="0 0 16 16" aria-hidden="true">
              <path d="M8 0l2 6-2 3-2-3z" fill="#b8231f" />
              <path d="M8 16l-2-5 2-2 2 2zM0 9l5-2 2 2-2 2zM16 9l-5-2-2 2 2 2z" fill="#7d7d80" />
            </svg>
            <span className="font-['Noto_Sans',sans-serif] text-[10px]">Navigraph</span>
          </a>
          <a href="#vatsim" className="relative grid h-7 w-[70px] place-items-center bg-[#c2c2c4] shadow">
            <span className="bg-linear-to-b from-[#2c55a8] from-40% to-[#2f8f5e] bg-clip-text font-['Noto_Sans',sans-serif] text-[15px] leading-5 font-semibold text-transparent">VATSIM</span>
            <svg className="absolute inset-0 size-full" viewBox="0 0 70 28" fill="none" aria-hidden="true">
              <path d="M37 8c5-5 14-5 19 1" stroke="#2c55a8" strokeDasharray="1 1" />
              <path d="M12 18c4 7 13 7 18 2" stroke="#2f8f5e" strokeDasharray="1 1" />
            </svg>
          </a>
          <a href="#pa" className="flex h-7 w-[47px] items-center justify-center bg-[#c2c2c4] text-black shadow">
            <svg className="h-4 w-2.5" viewBox="0 0 10 16" fill="none" stroke="currentColor" aria-hidden="true">
              <path d="M9 3v11L1 8z" strokeWidth="1.300" />
            </svg>
            <span className="pb-1 font-['Open_Sans',sans-serif] text-2xl leading-6">pa</span>
          </a>
        </div>
      </div>
    </footer>
  );
}

function Scrollbar() {
  return (
    <div className="flex w-[17px] shrink-0 flex-col items-stretch bg-[#26282c] text-[#8d8f92]" aria-hidden="true">
      <div className="grid h-[18px] place-items-center">
        <Glyph className="size-2" box="0 0 8 8"><path d="M1 6l3-4 3 4" strokeWidth="1.500" /></Glyph>
      </div>
      <div className="flex-[671]" />
      <div className="mx-px flex-[360] bg-[#7b7c7e]" />
      <div className="grid h-[21px] place-items-center">
        <Glyph className="size-2" box="0 0 8 8"><path d="M1 2l3 4 3-4" strokeWidth="1.500" /></Glyph>
      </div>
    </div>
  );
}

export default function App() {
  return (
    <div className="flex h-screen flex-col overflow-hidden bg-white">
      <Chrome />
      <div className="flex min-h-0 flex-1">
        <main className="flex min-w-0 flex-1 flex-col overflow-hidden">
          <div className="mx-auto mb-[38px] w-full max-w-[940px] shrink-0 border border-t-0 border-[#d9d9d9] bg-[#ededed] px-[89px] pb-[60px] shadow-[0_4px_16px_rgba(0,0,0,0.18)]">
            <div className="flex flex-col gap-2.5">
              <div className="h-[3px] bg-white shadow-[0_0_8px_rgba(0,0,0,0.25)]" />
              <Panel><Advert /></Panel>
              <Panel>
                <Toolbar />
                <MapView />
              </Panel>
              <Panel><DebugForm /></Panel>
            </div>
            <div className="mt-[30px] flex justify-center">
              <a href="#top" className="border border-black bg-[#3f3f3f] px-2 font-['Open_Sans',sans-serif] text-[13px] leading-[23px] text-white">
                Go to Top
              </a>
            </div>
          </div>
          <Footer />
        </main>
        <Scrollbar />
      </div>
    </div>
  );
}
